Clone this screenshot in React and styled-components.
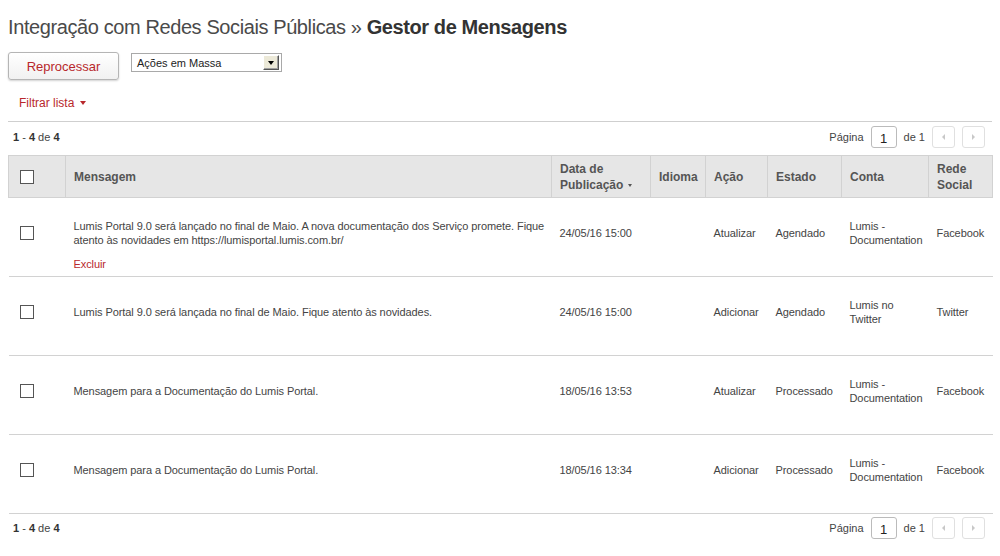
import React from 'react'
import styled, { createGlobalStyle } from 'styled-components'

const GlobalStyle = createGlobalStyle`
  body {
    margin: 0;
    background: #fff;
    font-family: "Liberation Sans", Arial, sans-serif;
    color: #444;
  }
`

const Page = styled.div({
  padding: '0 8px',
  width: '984px',
})

const Title = styled.h1({
  margin: '15px 0 0',
  fontSize: '20px',
  lineHeight: '24px',
  fontWeight: 'normal',
  color: '#4a4a4a',
  letterSpacing: '-0.4px',
  '& b': {
    color: '#333',
  },
})

const Toolbar = styled.div({
  display: 'flex',
  alignItems: 'flex-start',
  gap: '12px',
  marginTop: '13px',
})

const Button = styled.button({
  width: '111px',
  height: '28px',
  border: '1px solid #b5b5b5',
  borderRadius: '3px',
  background: 'linear-gradient(#ffffff, #f1f1f1)',
  boxShadow: '0 1px 2px rgba(0,0,0,0.18)',
  color: '#b8282c',
  fontFamily: 'inherit',
  fontSize: '13px',
  padding: 0,
})

const Select = styled.div({
  marginTop: '1px',
  width: '151px',
  height: '19px',
  boxSizing: 'border-box',
  border: '1px solid #a9a9a9',
  background: '#fff',
  display: 'flex',
  alignItems: 'center',
  justifyContent: 'space-between',
  padding: '0 2px 0 5px',
  fontSize: '11px',
  color: '#222',
})

const SelectArrow = styled.span({
  width: '16px',
  height: '15px',
  boxSizing: 'border-box',
  background: '#ece9d8',
  borderTop: '1px solid #fff',
  borderLeft: '1px solid #fff',
  borderRight: '1px solid #555',
  borderBottom: '1px solid #555',
  boxShadow: 'inset -1px -1px 0 #a0a0a0',
  display: 'flex',
  alignItems: 'center',
  justifyContent: 'center',
  '&::after': {
    content: '""',
    borderLeft: '3.5px solid transparent',
    borderRight: '3.5px solid transparent',
    borderTop: '4px solid #000',
  },
})

const Filter = styled.a({
  display: 'inline-flex',
  alignItems: 'center',
  gap: '6px',
  margin: '15px 0 0 11px',
  fontSize: '12px',
  lineHeight: '16px',
  color: '#b8282c',
  '&::after': {
    content: '""',
    borderLeft: '3.5px solid transparent',
    borderRight: '3.5px solid transparent',
    borderTop: '4px solid #b8282c',
  },
})

const Pager = styled.div(({ top }) => ({
  display: 'flex',
  alignItems: 'center',
  justifyContent: 'space-between',
  padding: top ? '4px 7px 7px 5px' : '3px 7px 6px 5px',
  marginTop: top ? '10px' : 0,
  borderTop: top ? '1px solid #cfcfcf' : 'none',
  fontSize: '11px',
  color: '#444',
  '& b': { color: '#333' },
}))

const PagerRight = styled.div({
  display: 'flex',
  alignItems: 'center',
  gap: '7px',
})

const PageInput = styled.div({
  width: '26px',
  height: '22px',
  boxSizing: 'border-box',
  border: '1px solid #bbb',
  borderRadius: '3px',
  display: 'flex',
  alignItems: 'center',
  justifyContent: 'center',
  fontSize: '13px',
  color: '#222',
  paddingTop: '2px',
})

const NavButton = styled.span(({ dir }) => ({
  width: '23px',
  height: '22px',
  boxSizing: 'border-box',
  border: '1px solid #e0e0e0',
  borderRadius: '3px',
  display: 'flex',
  alignItems: 'center',
  justifyContent: 'center',
  '&::after': {
    content: '""',
    borderTop: '3px solid transparent',
    borderBottom: '3px solid transparent',
    [dir === 'left' ? 'borderRight' : 'borderLeft']: '3px solid #c8c8c8',
  },
}))

const Table = styled.table({
  width: '984px',
  borderCollapse: 'collapse',
  tableLayout: 'fixed',
})

const Th = styled.th(({ w }) => ({
  width: w,
  height: '42px',
  boxSizing: 'border-box',
  background: '#e6e6e6',
  border: '1px solid #d2d2d2',
  textAlign: 'left',
  padding: '0 8px',
  fontSize: '12px',
  lineHeight: '16px',
  color: '#555',
  fontWeight: 'bold',
}))

const Td = styled.td({
  height: '53px',
  padding: '8px 7px 17px 8px',
  verticalAlign: 'middle',
  fontSize: '11px',
  lineHeight: '14px',
  letterSpacing: '-0.08px',
  color: '#444',
})

const Row = styled.tr({
  borderBottom: '1px solid #d2d2d2',
})

const Check = styled.span({
  display: 'block',
  width: '14px',
  height: '14px',
  boxSizing: 'border-box',
  border: '1px solid #555',
  background: '#fff',
  marginLeft: '3px',
})

const SortCaret = styled.span({
  display: 'inline-block',
  marginLeft: '5px',
  verticalAlign: 'middle',
  borderLeft: '2.5px solid transparent',
  borderRight: '2.5px solid transparent',
  borderTop: '3px solid #555',
})

const Delete = styled.a({
  display: 'block',
  marginTop: '10px',
  marginBottom: '-24px',
  color: '#b8282c',
})

const rows = [
  {
    msg: 'Lumis Portal 9.0 será lançado no final de Maio. A nova documentação dos Serviço promete. Fique atento às novidades em https://lumisportal.lumis.com.br/',
    date: '24/05/16 15:00',
    action: 'Atualizar',
    state: 'Agendado',
    account: 'Lumis - Documentation',
    net: 'Facebook',
    excluir: true,
  },
  {
    msg: 'Lumis Portal 9.0 será lançada no final de Maio. Fique atento às novidades.',
    date: '24/05/16 15:00',
    action: 'Adicionar',
    state: 'Agendado',
    account: 'Lumis no Twitter',
    net: 'Twitter',
  },
  {
    msg: 'Mensagem para a Documentação do Lumis Portal.',
    date: '18/05/16 13:53',
    action: 'Atualizar',
    state: 'Processado',
    account: 'Lumis - Documentation',
    net: 'Facebook',
  },
  {
    msg: 'Mensagem para a Documentação do Lumis Portal.',
    date: '18/05/16 13:34',
    action: 'Adicionar',
    state: 'Processado',
    account: 'Lumis - Documentation',
    net: 'Facebook',
  },
]

const PagerBar = ({ top }) => (
  <Pager top={top}>
    <span>
      <b>1</b> - <b>4</b> de <b>4</b>
    </span>
    <PagerRight>
      <span>Página</span>
      <PageInput>1</PageInput>
      <span>de 1</span>
      <NavButton dir="left" />
      <NavButton dir="right" />
    </PagerRight>
  </Pager>
)

export default function App() {
  return (
    <Page>
      <GlobalStyle />
      <Title>
        Integração com Redes Sociais Públicas » <b>Gestor de Mensagens</b>
      </Title>
      <Toolbar>
        <Button>Reprocessar</Button>
        <Select>
          Ações em Massa
          <SelectArrow />
        </Select>
      </Toolbar>
      <Filter>Filtrar lista</Filter>
      <PagerBar top />
      <Table>
        <thead>
          <tr>
            <Th w="57px">
              <Check />
            </Th>
            <Th w="486px">Mensagem</Th>
            <Th w="99px">
              Data de
              <br />
              Publicação
              <SortCaret />
            </Th>
            <Th w="55px">Idioma</Th>
            <Th w="62px">Ação</Th>
            <Th w="74px">Estado</Th>
            <Th w="87px">Conta</Th>
            <Th w="64px">
              Rede
              <br />
              Social
            </Th>
          </tr>
        </thead>
        <tbody>
          {rows.map((r, i) => (
            <Row key={i}>
              <Td>
                <Check />
              </Td>
              <Td>
                {r.msg}
                {r.excluir && <Delete>Excluir</Delete>}
              </Td>
              <Td>{r.date}</Td>
              <Td />
              <Td>{r.action}</Td>
              <Td>{r.state}</Td>
              <Td>{r.account}</Td>
              <Td>{r.net}</Td>
            </Row>
          ))}
        </tbody>
      </Table>
      <PagerBar />
    </Page>
  )
}
